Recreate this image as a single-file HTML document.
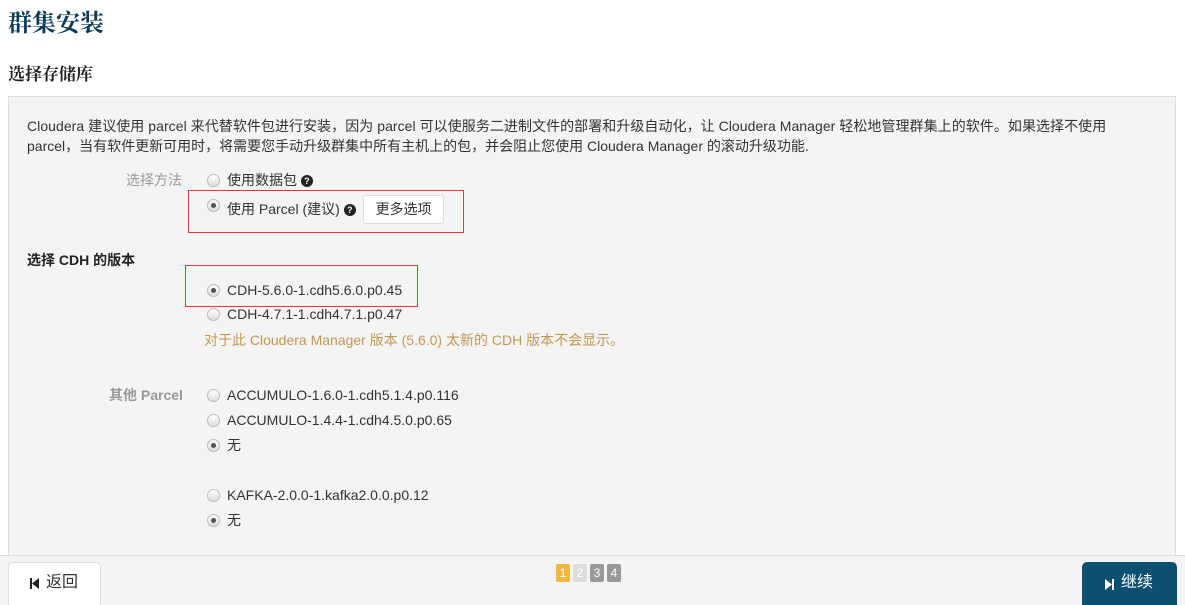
<!DOCTYPE html><html><head><meta charset="utf-8"><style>
*{margin:0;padding:0;box-sizing:border-box}
html,body{width:1185px;height:605px;overflow:hidden}
body{background:#fff;font-family:"Liberation Sans","Noto Sans CJK SC",sans-serif;font-size:14px;color:#333;position:relative}
.a{position:absolute;white-space:nowrap;line-height:20px}
.r{position:absolute;width:13px;height:13px;border-radius:50%;border:1px solid #bbb;background:linear-gradient(#fff,#ddd)}
.r.on::after{content:"";position:absolute;left:3px;top:3px;width:5px;height:5px;border-radius:50%;background:#555}
.q{display:inline-block;width:12px;height:12px;border-radius:50%;background:#222;color:#fff;font-size:9px;font-weight:bold;line-height:12px;text-align:center;vertical-align:1px}
.box{position:absolute;border:1px solid #e33}
</style></head><body>
<div class="a" style="left:8px;top:8px;font-family:'Liberation Serif','Noto Serif CJK SC',serif;font-size:24px;font-weight:bold;line-height:32px;color:#0d3a55">群集安装</div>
<div class="a" style="left:8px;top:64px;font-family:'Liberation Serif','Noto Serif CJK SC',serif;font-size:17px;font-weight:bold;line-height:22px;color:#222">选择存储库</div>
<div style="position:absolute;left:8px;top:96px;width:1168px;height:470px;background:#f4f4f4;border:1px solid #ddd"></div>
<div class="a" style="left:27px;top:116px;letter-spacing:0.05px">Cloudera 建议使用 parcel 来代替软件包进行安装，因为 parcel 可以使服务二进制文件的部署和升级自动化，让 Cloudera Manager 轻松地管理群集上的软件。如果选择不使用</div>
<div class="a" style="left:27px;top:136px">parcel，当有软件更新可用时，将需要您手动升级群集中所有主机上的包，并会阻止您使用 Cloudera Manager 的滚动升级功能.</div>
<div class="a" style="left:126px;top:170px;color:#999">选择方法</div>
<div class="r" style="left:207px;top:174px"></div><div class="a" style="left:227px;top:170px">使用数据包 <span class="q">?</span></div>
<div class="box" style="left:188px;top:190px;width:276px;height:43px"></div>
<div class="r on" style="left:207px;top:199px"></div><div class="a" style="left:227px;top:199px">使用 Parcel (建议) <span class="q">?</span></div>
<div style="position:absolute;left:363px;top:195px;width:81px;height:29px;background:#fff;border:1px solid #ddd;border-radius:3px;text-align:center;line-height:27px">更多选项</div>
<div class="a" style="left:27px;top:250px;font-weight:bold;color:#222">选择 CDH 的版本</div>
<div class="box" style="left:185px;top:265px;width:233px;height:42px"></div>
<div class="r on" style="left:207px;top:284px"></div><div class="a" style="left:227px;top:280px">CDH-5.6.0-1.cdh5.6.0.p0.45</div>
<div class="r" style="left:207px;top:308px"></div><div class="a" style="left:227px;top:304px">CDH-4.7.1-1.cdh4.7.1.p0.47</div>
<div class="a" style="left:204px;top:330px;color:#c09853">对于此 Cloudera Manager 版本 (5.6.0) 太新的 CDH 版本不会显示。</div>
<div class="a" style="left:109px;top:385px;color:#999;font-weight:bold">其他 Parcel</div>
<div class="r" style="left:207px;top:389px"></div><div class="a" style="left:227px;top:385px">ACCUMULO-1.6.0-1.cdh5.1.4.p0.116</div>
<div class="r" style="left:207px;top:414px"></div><div class="a" style="left:227px;top:410px">ACCUMULO-1.4.4-1.cdh4.5.0.p0.65</div>
<div class="r on" style="left:207px;top:439px"></div><div class="a" style="left:227px;top:435px">无</div>
<div class="r" style="left:207px;top:489px"></div><div class="a" style="left:227px;top:485px">KAFKA-2.0.0-1.kafka2.0.0.p0.12</div>
<div class="r on" style="left:207px;top:514px"></div><div class="a" style="left:227px;top:510px">无</div>
<div style="position:absolute;left:0;top:555px;width:1185px;height:50px;background:#f4f4f4;border-top:1px solid #ddd"></div>
<div style="position:absolute;left:8px;top:562px;width:93px;height:50px;background:#fff;border:1px solid #ddd;border-radius:5px"></div>
<svg style="position:absolute;left:30px;top:578px" width="9" height="11" viewBox="0 0 9 11"><rect x="0" y="0" width="2" height="11" fill="#222"/><path d="M9 0 L2 5.5 L9 11Z" fill="#222"/></svg>
<div class="a" style="left:46px;top:573px;font-size:16px;color:#333">返回</div>
<div style="position:absolute;left:556px;top:564px;display:flex;gap:3px">
<span style="width:14px;height:18px;background:#f0b840;color:#fff;font-size:12px;text-align:center;line-height:18px;border-radius:2px">1</span>
<span style="width:14px;height:18px;background:#ddd;color:#fff;font-size:12px;text-align:center;line-height:18px;border-radius:2px">2</span>
<span style="width:14px;height:18px;background:#999;color:#fff;font-size:12px;text-align:center;line-height:18px;border-radius:2px">3</span>
<span style="width:14px;height:18px;background:#999;color:#fff;font-size:12px;text-align:center;line-height:18px;border-radius:2px">4</span></div>
<div style="position:absolute;left:1082px;top:562px;width:95px;height:50px;background:#0b5070;border-radius:5px"></div>
<svg style="position:absolute;left:1105px;top:579px" width="9" height="11" viewBox="0 0 9 11"><path d="M0 0 L7 5.5 L0 11Z" fill="#fff"/><rect x="7" y="0" width="2" height="11" fill="#fff"/></svg>
<div class="a" style="left:1121px;top:573px;font-size:16px;color:#fff">继续</div>
</body></html>
